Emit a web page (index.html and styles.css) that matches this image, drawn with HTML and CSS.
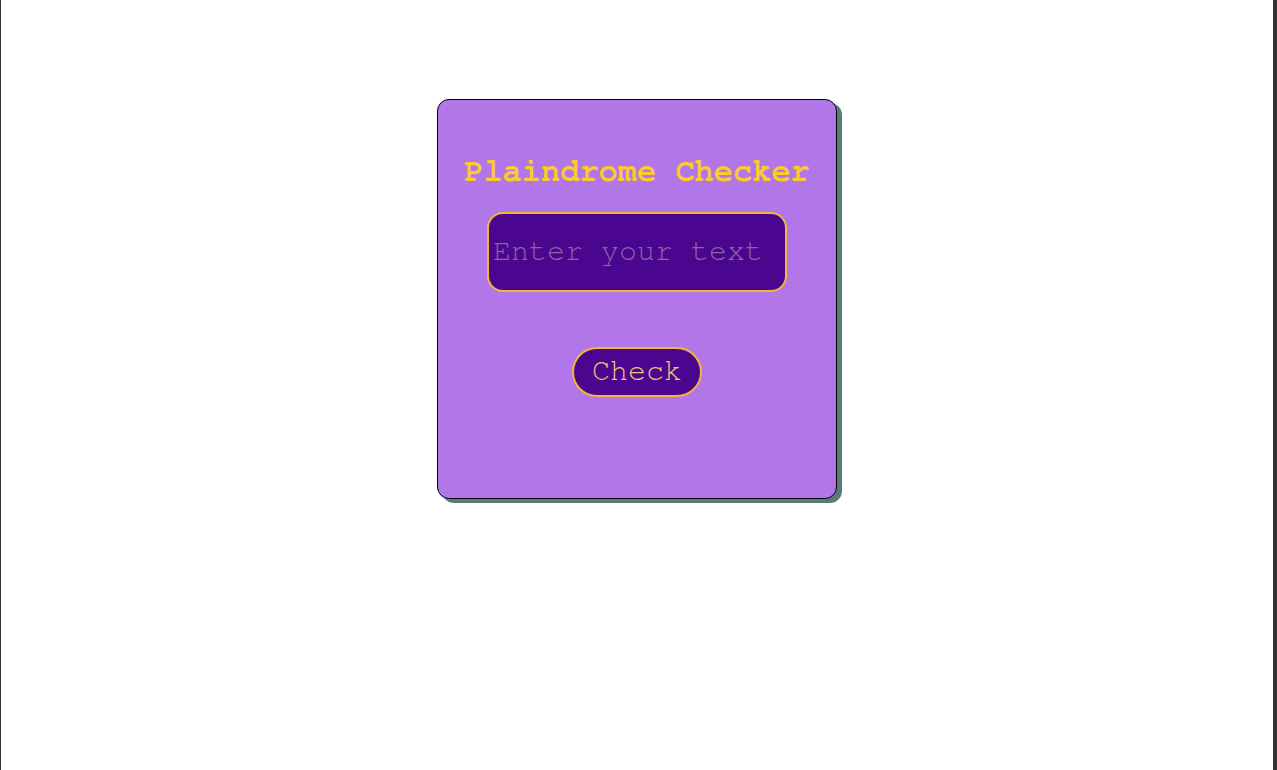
FILE: index.html
```html
<!DOCTYPE html>
<html>
<head>
<meta charset="utf-8">
<title>Palindrome Checker</title>
<link rel="stylesheet" href="styles.css">
</head>
<body>
<div class="frame">
  <main class="card">
    <h1 class="title">Plaindrome Checker</h1>
    <input class="text-input" type="text" placeholder="Enter your text">
    <button class="check-btn" type="button">Check</button>
  </main>
</div>
</body>
</html>
```
FILE: styles.css
```css
html, body {
  margin: 0;
  padding: 0;
  background: #ffffff;
}
.frame {
  box-sizing: border-box;
  min-height: 100vh;
  border-left: 1px solid #333333;
  border-right: 4px solid #333333;
  display: flex;
  justify-content: center;
  align-items: flex-start;
  padding-top: 99px;
}
.card {
  box-sizing: border-box;
  width: 400px;
  height: 400px;
  background: #b176e8;
  border: 1px solid #000000;
  border-radius: 12px;
  box-shadow: 5px 4px 0 #5b7a78;
  display: flex;
  flex-direction: column;
  align-items: center;
  padding-top: 53px;
}
.title {
  margin: 0;
  font-family: "Nimbus Mono PS", "Nimbus Mono L", "FreeMono", "Courier", "Courier New", "Liberation Mono", monospace;
  font-weight: bold;
  font-size: 32px;
  line-height: 36px;
  color: #fbca2c;
}
.text-input {
  box-sizing: border-box;
  margin-top: 23px;
  width: 300px;
  height: 80px;
  background: #4b068f;
  border: 2px solid #f4b53a;
  border-radius: 16px;
  padding: 0 4px 2px;
  font-family: "Nimbus Mono PS", "Nimbus Mono L", "FreeMono", "Courier", "Courier New", "Liberation Mono", monospace;
  font-size: 30px;
  color: #f9c62a;
  outline: none;
}
.text-input::placeholder {
  color: #8766a3;
}
.check-btn {
  box-sizing: border-box;
  margin-top: 55px;
  width: 130px;
  height: 50px;
  background: #4b068f;
  border: 2px solid #f4b53a;
  border-radius: 25px;
  font-family: "Nimbus Mono PS", "Nimbus Mono L", "FreeMono", "Courier", "Courier New", "Liberation Mono", monospace;
  font-size: 30px;
  color: #f2c27a;
  padding: 0 0 2px;
  cursor: pointer;
}
```
